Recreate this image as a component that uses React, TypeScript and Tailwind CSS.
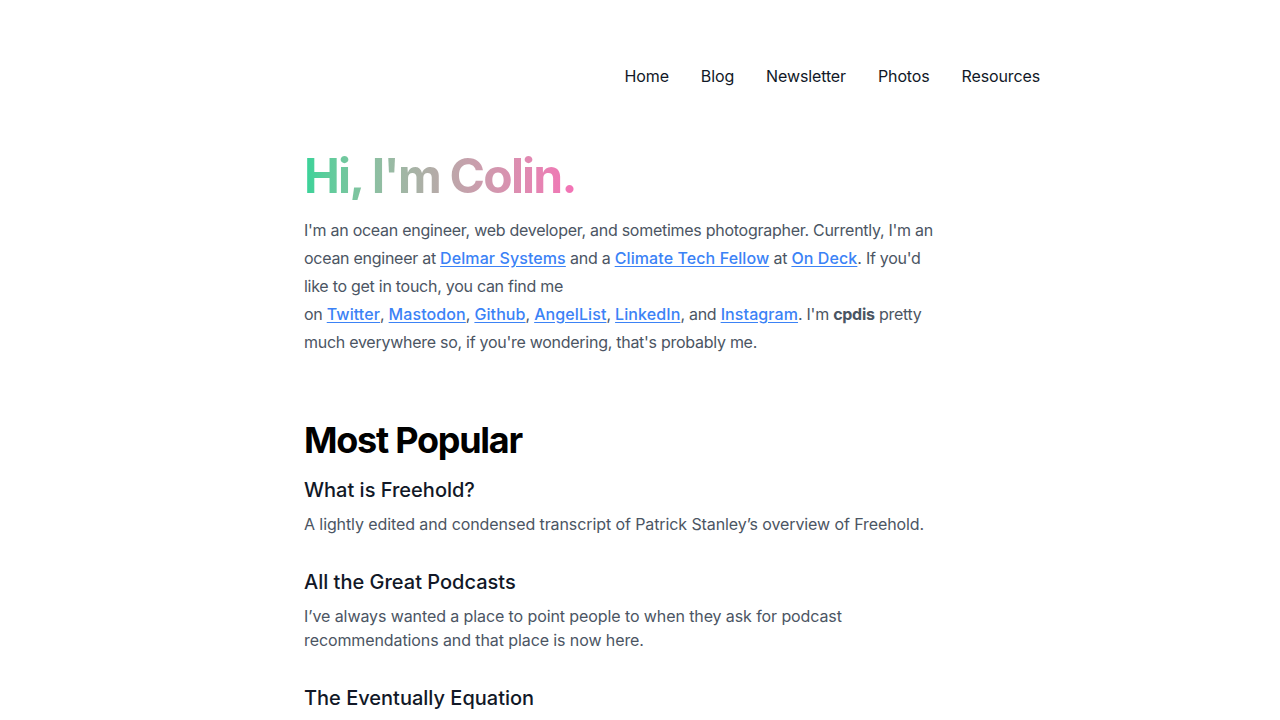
import React from "react";

const A = ({ children }: { children: React.ReactNode }) => (
  <a href="#" className="font-medium tracking-[0.006em] text-[#3b82f6] underline underline-offset-2">
    {children}
  </a>
);

const posts = [
  {
    title: "What is Freehold?",
    desc: "A lightly edited and condensed transcript of Patrick Stanley\u2019s overview of Freehold.",
  },
  {
    title: "All the Great Podcasts",
    desc: "I\u2019ve always wanted a place to point people to when they ask for podcast recommendations and that place is now here.",
  },
  {
    title: "The Eventually Equation",
    desc: "",
  },
];

export default function App() {
  return (
    <div className="min-h-screen bg-white font-['Inter',sans-serif] text-gray-900">
      <nav className="mx-auto flex max-w-[800px] justify-end gap-8 pt-16 text-base leading-6 tracking-[-0.008em] text-[#111827]">
        {["Home", "Blog", "Newsletter", "Photos", "Resources"].map((n) => (
          <a key={n} href="#">
            {n}
          </a>
        ))}
      </nav>
      <main className="mx-auto max-w-2xl pt-16">
        <h1 className="w-fit bg-gradient-to-r from-[#34d399] to-[#f472b6] bg-clip-text text-5xl leading-[48px] font-bold tracking-[-0.037em] text-transparent">
          Hi, I'm Colin.
        </h1>
        <p className="mt-4 max-w-[640px] text-base leading-7 tracking-[-0.017em] text-[#4b5563]">
          I'm an ocean engineer, web developer, and sometimes photographer. Currently, I'm an ocean engineer at{" "}
          <A>Delmar Systems</A> and a <A>Climate Tech Fellow</A> at <A>On Deck</A>. If you'd like to get in touch, you can find me
          <br />
          on <A>Twitter</A>, <A>Mastodon</A>, <A>Github</A>, <A>AngelList</A>, <A>LinkedIn</A>, and <A>Instagram</A>. I'm{" "}
          <strong className="font-bold">cpdis</strong> pretty much everywhere so, if you're wondering, that's probably me.
        </p>
        <h2 className="mt-16 text-4xl leading-10 font-bold tracking-[-0.035em] text-black">Most Popular</h2>
        <div className="mt-4 flex flex-col gap-8">
          {posts.map((p) => (
            <div key={p.title} className="flex flex-col gap-2">
              <h3 className="text-xl leading-7 font-medium tracking-normal text-[#111827]">{p.title}</h3>
              {p.desc && <p className="max-w-[640px] text-base leading-6 tracking-[-0.006em] text-[#4b5563]">{p.desc}</p>}
            </div>
          ))}
        </div>
      </main>
    </div>
  );
}
